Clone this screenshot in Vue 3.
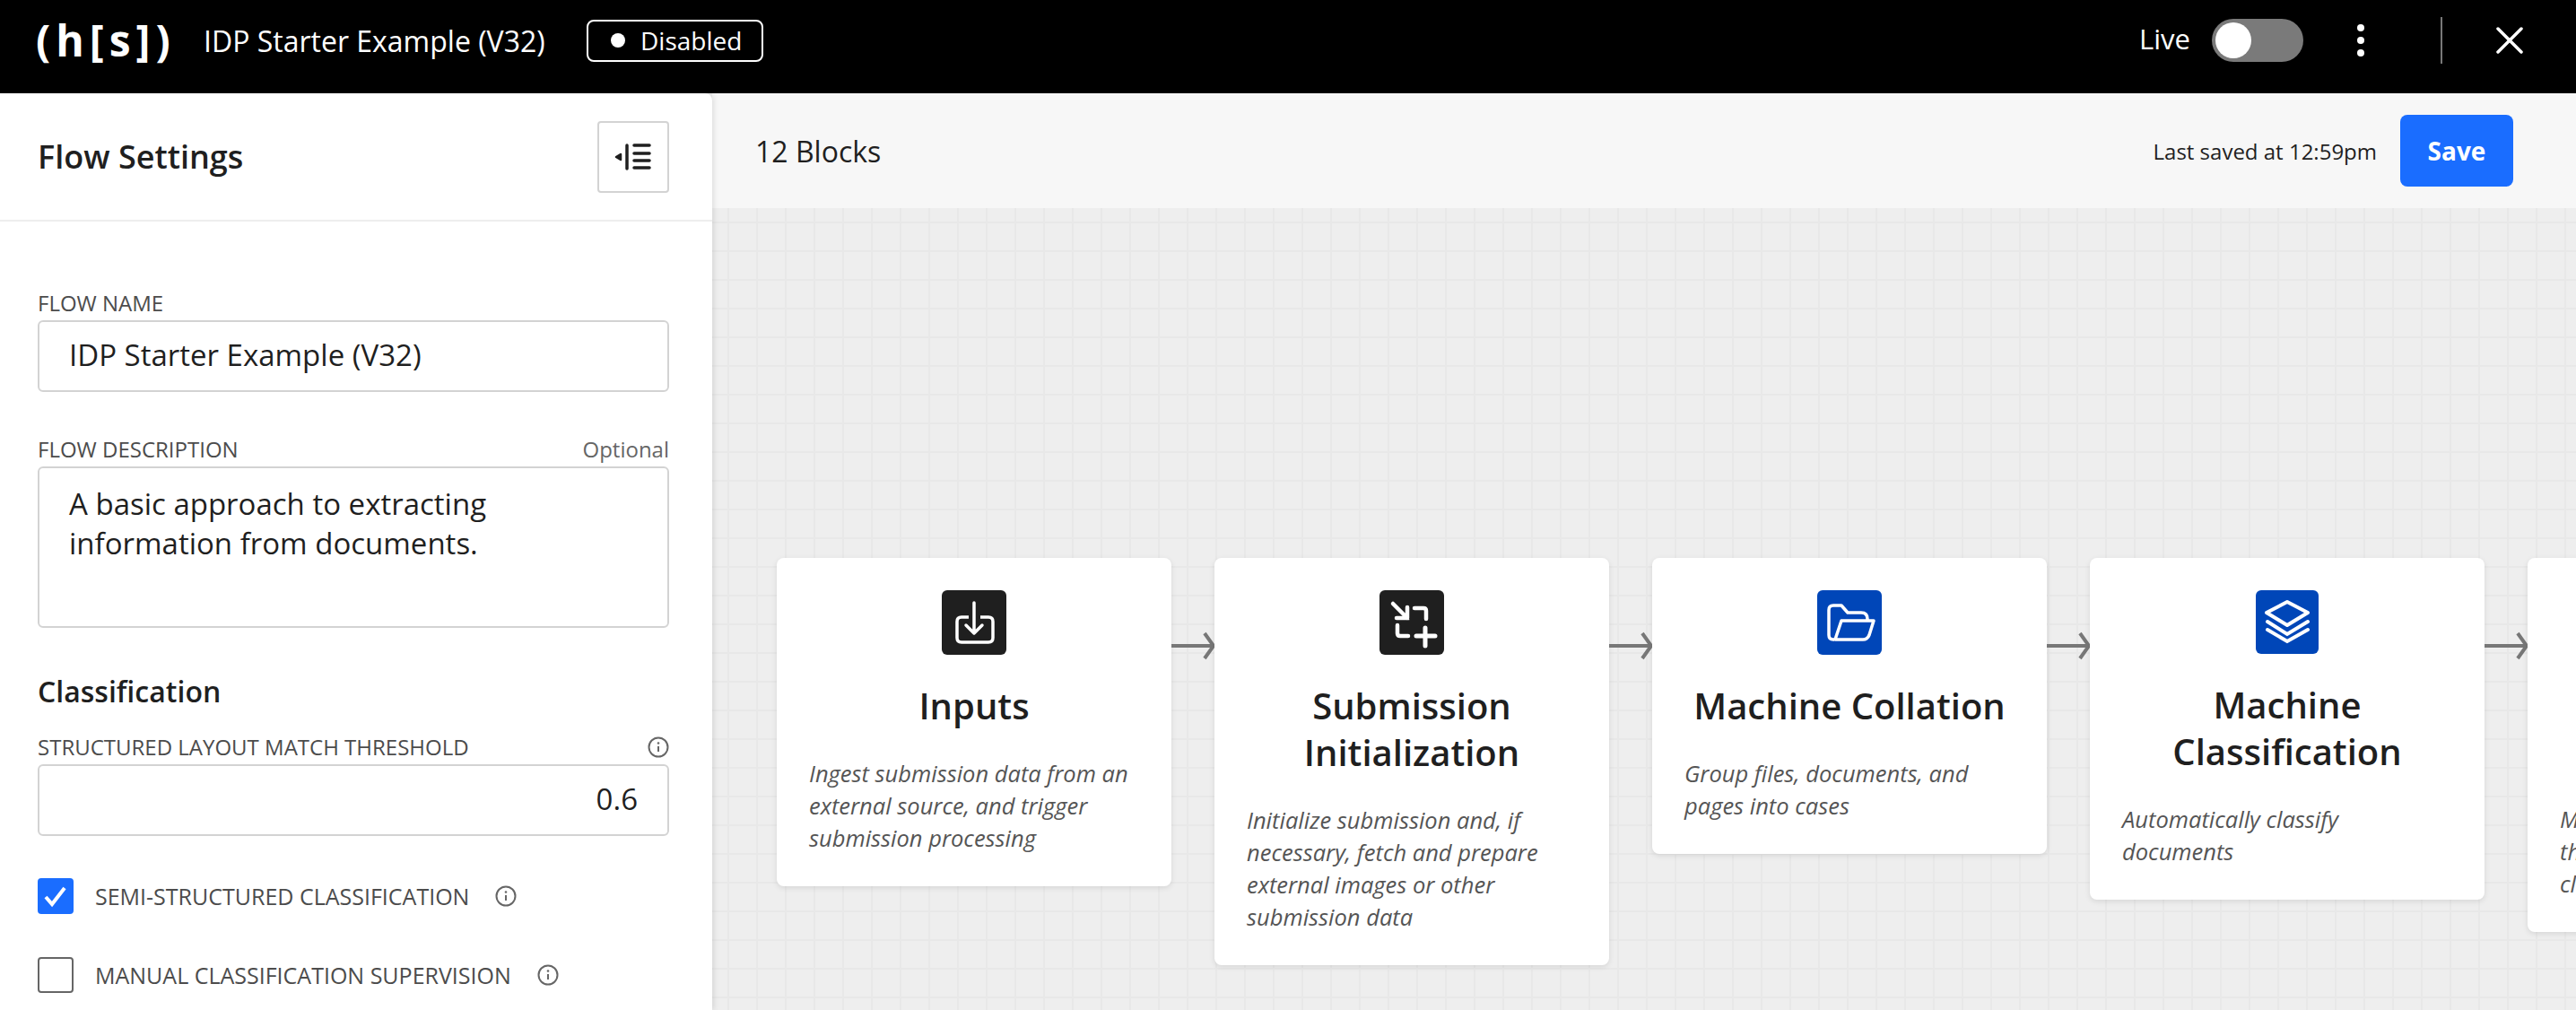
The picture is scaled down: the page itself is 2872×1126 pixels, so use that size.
<script setup>
const blocks = [
  { title: 'Inputs', desc: 'Ingest submission data from an external source, and trigger submission processing', icon: 'inputs', color: 'dark' },
  { title: 'Submission Initialization', desc: 'Initialize submission and, if necessary, fetch and prepare external images or other submission data', icon: 'init', color: 'dark' },
  { title: 'Machine Collation', desc: 'Group files, documents, and pages into cases', icon: 'folder', color: 'blue' },
  { title: 'Machine Classification', desc: 'Automatically classify documents', icon: 'layers', color: 'blue' },
  { title: 'Manual Classification', desc: 'Manually classify documents that the machine could not classify on its own', icon: 'layers', color: 'dark' },
]
</script>

<template>
  <div class="app">
    <header class="topbar">
      <div class="logo">(h[s])</div>
      <div class="flow-title">IDP Starter Example (V32)</div>
      <div class="badge"><span class="dot"></span>Disabled</div>
      <div class="top-right">
        <span class="live">Live</span>
        <div class="toggle"><span class="knob"></span></div>
        <div class="more"><i></i><i></i><i></i></div>
        <div class="divider"></div>
        <svg class="close" width="32" height="32" viewBox="0 0 32 32">
          <path d="M3 3L29 29M29 3L3 29" stroke="#fff" stroke-width="3.5" stroke-linecap="round" />
        </svg>
      </div>
    </header>

    <div class="body">
      <aside class="panel">
        <div class="panel-head">
          <h2>Flow Settings</h2>
          <button class="collapse">
            <svg width="76" height="76" viewBox="0 0 76 76">
              <path d="M24 35L19 38L24 41Z" fill="#1f1f1f" stroke="#1f1f1f" stroke-width="2.5" stroke-linejoin="round" />
              <path d="M31 25V51" stroke="#1f1f1f" stroke-width="3.5" stroke-linecap="round" />
              <path d="M39 25H56M39 34H56M39 42H56M39 50H56" stroke="#1f1f1f" stroke-width="3.5" stroke-linecap="round" />
            </svg>
          </button>
        </div>

        <div class="form">
          <div class="field first">
            <div class="label"><span>FLOW NAME</span></div>
            <div class="input">IDP Starter Example (V32)</div>
          </div>
          <div class="field second">
            <div class="label"><span>FLOW DESCRIPTION</span><span class="optional">Optional</span></div>
            <div class="input area">A basic approach to extracting information from documents.</div>
          </div>
          <h3>Classification</h3>
          <div class="field">
            <div class="label">
              <span>STRUCTURED LAYOUT MATCH THRESHOLD</span>
              <svg class="info" width="24" height="24" viewBox="0 0 24 24">
                <circle cx="12" cy="12" r="10.5" fill="none" stroke="#666" stroke-width="2" />
                <path d="M12 11V17" stroke="#666" stroke-width="2" />
                <circle cx="12" cy="7.5" r="1.3" fill="#666" />
              </svg>
            </div>
            <div class="input number">0.6</div>
          </div>
          <div class="check-row one">
            <span class="box on">
              <svg width="40" height="40" viewBox="0 0 40 40">
                <path d="M9 21L16 29L30 11" fill="none" stroke="#fff" stroke-width="4" />
              </svg>
            </span>
            <span>SEMI-STRUCTURED CLASSIFICATION</span>
            <svg class="info" width="24" height="24" viewBox="0 0 24 24">
              <circle cx="12" cy="12" r="10.5" fill="none" stroke="#666" stroke-width="2" />
              <path d="M12 11V17" stroke="#666" stroke-width="2" />
              <circle cx="12" cy="7.5" r="1.3" fill="#666" />
            </svg>
          </div>
          <div class="check-row two">
            <span class="box"></span>
            <span>MANUAL CLASSIFICATION SUPERVISION</span>
            <svg class="info" width="24" height="24" viewBox="0 0 24 24">
              <circle cx="12" cy="12" r="10.5" fill="none" stroke="#666" stroke-width="2" />
              <path d="M12 11V17" stroke="#666" stroke-width="2" />
              <circle cx="12" cy="7.5" r="1.3" fill="#666" />
            </svg>
          </div>
        </div>
      </aside>

      <main class="main">
        <div class="main-head">
          <span class="count">12 Blocks</span>
          <span class="saved">Last saved at 12:59pm</span>
          <button class="save">Save</button>
        </div>
        <div class="canvas">
          <template v-for="(b, i) in blocks" :key="b.title">
            <div class="card">
              <div class="icon" :class="b.color + ' ' + b.icon">
                <svg v-if="b.icon == 'inputs'" width="72" height="72" viewBox="0 0 72 72">
                  <path d="M30 30H22Q17 30 17 35V53Q17 58 22 58H52Q57 58 57 53V35Q57 30 52 30H43" fill="none" stroke="#fff" stroke-width="3.5" />
                  <path d="M36 14V47M27 39L36 48L45 39" fill="none" stroke="#fff" stroke-width="3.5" stroke-linecap="round" stroke-linejoin="round" />
                </svg>
                <svg v-else-if="b.icon == 'init'" width="72" height="72" viewBox="0 0 72 72">
                  <path d="M15 15L31 31M19 31H31V19" fill="none" stroke="#fff" stroke-width="4.5" stroke-linecap="round" />
                  <path d="M39 20H49Q52 20 52 23V32" fill="none" stroke="#fff" stroke-width="4.5" stroke-linecap="round" />
                  <path d="M20 39V48Q20 51 23 51H32" fill="none" stroke="#fff" stroke-width="4.5" stroke-linecap="round" />
                  <path d="M51 42V62M41 51H62" fill="none" stroke="#fff" stroke-width="5" stroke-linecap="round" />
                </svg>
                <svg v-else-if="b.icon == 'folder'" width="72" height="72" viewBox="0 0 72 72">
                  <path d="M19 55H18Q13 55 13 50V22Q13 17 18 17H27L34 25H49Q56 25 56 32V34" fill="none" stroke="#fff" stroke-width="3.5" stroke-linejoin="round" />
                  <path d="M27 34H63L58 50Q56 55 51 55H20Z" fill="none" stroke="#fff" stroke-width="3.5" stroke-linejoin="round" />
                </svg>
                <svg v-else width="70" height="71" viewBox="0 0 70 71">
                  <path d="M35 13L58 25L35 39L12 25Z" fill="none" stroke="#fff" stroke-width="4" stroke-linejoin="round" />
                  <path d="M13 35L35 49L58 35" fill="none" stroke="#fff" stroke-width="4" stroke-linecap="round" />
                  <path d="M13 44L35 57L58 44" fill="none" stroke="#fff" stroke-width="4" stroke-linecap="round" />
                </svg>
              </div>
              <h4>{{ b.title }}</h4>
              <p>{{ b.desc }}</p>
            </div>
            <svg v-if="i < blocks.length - 1" class="arrow" width="48" height="32" viewBox="0 0 48 32">
              <path d="M0 16H46M37 2L47 16L37 30" fill="none" stroke="#777" stroke-width="4" />
            </svg>
          </template>
        </div>
      </main>
    </div>
  </div>
</template>

<style scoped>
.app {
  width: 2872px;
  height: 1126px;
  overflow: hidden;
  display: flex;
  flex-direction: column;
  font-family: "Open Sans", sans-serif;
  color: #1f1f1f;
}

.topbar {
  height: 104px;
  flex-shrink: 0;
  background: #000;
  color: #fff;
  display: flex;
  align-items: center;
  padding: 0 58px 14px 40px;
  box-sizing: border-box;
}

.logo {
  font-size: 48px;
  font-weight: 700;
  letter-spacing: 6px;
  line-height: 56px;
  width: 187px;
}

.flow-title {
  font-size: 32px;
  width: 427px;
}

.badge {
  width: 197px;
  height: 47px;
  box-sizing: border-box;
  border: 2px solid #fff;
  border-radius: 8px;
  display: flex;
  align-items: center;
  padding-left: 25px;
  font-size: 28px;
}

.dot {
  width: 16px;
  height: 16px;
  border-radius: 50%;
  background: #fff;
  margin-right: 17px;
}

.top-right {
  margin-left: auto;
  display: flex;
  align-items: center;
}

.live {
  font-size: 31px;
  margin-right: 24px;
  margin-bottom: 4px;
}

.toggle {
  width: 102px;
  height: 48px;
  border-radius: 24px;
  background: #7a7a7a;
  display: flex;
  align-items: center;
  padding-left: 4px;
  box-sizing: border-box;
}

.knob {
  width: 40px;
  height: 40px;
  border-radius: 50%;
  background: #fff;
}

.more {
  width: 8px;
  display: flex;
  flex-direction: column;
  gap: 6px;
  margin-left: 60px;
}

.more i {
  width: 8px;
  height: 8px;
  border-radius: 50%;
  background: #fff;
}

.divider {
  width: 2px;
  height: 52px;
  background: #777;
  margin-left: 85px;
}

.close {
  margin-left: 59px;
}

.body {
  flex: 1;
  display: flex;
  min-height: 0;
}

.panel {
  width: 794px;
  flex-shrink: 0;
  background: #fff;
  border-top-right-radius: 8px;
  box-shadow: 2px 0 6px rgba(0, 0, 0, 0.1);
  position: relative;
  z-index: 1;
}

.panel-head {
  height: 143px;
  box-sizing: border-box;
  border-bottom: 2px solid #eee;
  display: flex;
  align-items: center;
  justify-content: space-between;
  padding: 0 48px 0 42px;
}

h2 {
  margin: 0;
  font-size: 36px;
  font-weight: 600;
}

.collapse {
  width: 80px;
  height: 80px;
  padding: 0;
  background: #fff;
  border: 2px solid #d3d3d3;
  border-radius: 4px;
  display: flex;
  align-items: center;
  justify-content: center;
}

.form {
  padding: 0 48px 0 42px;
}

.field.first {
  margin-top: 74px;
}

.field.second {
  margin-top: 47px;
}

.label {
  display: flex;
  justify-content: space-between;
  align-items: center;
  font-size: 24px;
  line-height: 34px;
  color: #4c4c4c;
  margin-bottom: 2px;
}

.optional {
  color: #666;
}

.input {
  box-sizing: border-box;
  height: 80px;
  border: 2px solid #d3d3d3;
  border-radius: 6px;
  padding: 0 33px 2px;
  font-size: 33px;
  line-height: 44px;
  display: flex;
  align-items: center;
}

.input.area {
  height: 180px;
  align-items: flex-start;
  padding-top: 18px;
}

.input.number {
  justify-content: flex-end;
}

h3 {
  margin: 49px 0 0;
  font-size: 32px;
  line-height: 44px;
  font-weight: 600;
}

.info {
  flex-shrink: 0;
}

h3 + .field {
  margin-top: 23px;
}

.check-row {
  display: flex;
  align-items: center;
  font-size: 25px;
  color: #4c4c4c;
  height: 40px;
}

.check-row.one {
  margin-top: 47px;
}

.check-row.two {
  margin-top: 48px;
}

.check-row .info {
  margin-left: 29px;
}

.box {
  width: 40px;
  height: 40px;
  box-sizing: border-box;
  border: 2px solid #666;
  border-radius: 4px;
  margin-right: 24px;
  flex-shrink: 0;
}

.box.on {
  background: #1a6dff;
  border: none;
}

.main {
  flex: 1;
  min-width: 0;
  display: flex;
  flex-direction: column;
}

.main-head {
  height: 128px;
  flex-shrink: 0;
  box-sizing: border-box;
  background: #f7f7f7;
  display: flex;
  align-items: center;
  padding: 0 70px 0 48px;
}

.count {
  font-size: 32px;
}

.saved {
  margin-left: auto;
  font-size: 24px;
}

.save {
  width: 126px;
  height: 80px;
  margin-left: 26px;
  background: #1a6dff;
  border: none;
  border-radius: 8px;
  color: #fff;
  font-family: inherit;
  font-size: 28px;
  font-weight: 700;
}

.canvas {
  flex: 1;
  min-height: 0;
  overflow: hidden;
  display: flex;
  align-items: flex-start;
  padding: 390px 0 0 72px;
  background-color: #eee;
  background-image:
    linear-gradient(to right, #e8e8e8 2px, transparent 2px),
    linear-gradient(to bottom, #e8e8e8 2px, transparent 2px);
  background-size: 32px 32px;
  background-position: 17px 15px;
}

.card {
  width: 440px;
  flex-shrink: 0;
  box-sizing: border-box;
  background: #fff;
  border-radius: 8px;
  padding: 36px;
  box-shadow: 0 2px 6px rgba(0, 0, 0, 0.1);
}

.icon {
  width: 72px;
  height: 72px;
  margin: 0 auto;
  border-radius: 6px;
  display: flex;
  align-items: center;
  justify-content: center;
}

.icon.layers {
  width: 70px;
  height: 71px;
  margin-bottom: 1px;
}

.icon.dark {
  background: #1f1f1f;
}

.icon.blue {
  background: #0046b8;
}

h4 {
  margin: 31px 0 31px;
  font-size: 40px;
  line-height: 52px;
  font-weight: 600;
  text-align: center;
}

p {
  margin: 0;
  font-size: 25.5px;
  line-height: 36px;
  font-style: italic;
  color: #555;
}

.arrow {
  flex-shrink: 0;
  margin-top: 82px;
}
</style>

<style>
html,
body {
  margin: 0;
  background: #eee;
}
</style>
